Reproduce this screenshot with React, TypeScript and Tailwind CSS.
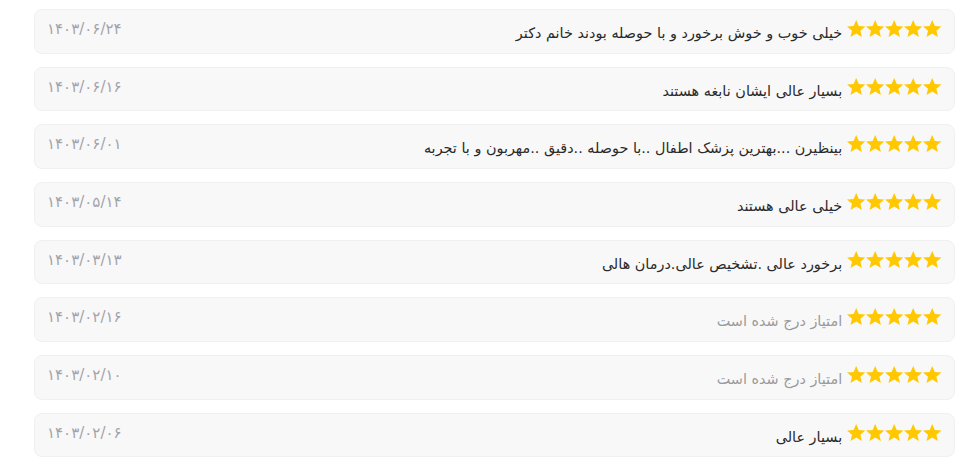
import React from 'react';

type Review = { date: string; text: string; muted?: boolean };

const reviews: Review[] = [
  { date: '۱۴۰۳/۰۶/۲۴', text: 'خیلی خوب و خوش برخورد و با حوصله بودند خانم دکتر' },
  { date: '۱۴۰۳/۰۶/۱۶', text: 'بسیار عالی ایشان نابغه هستند' },
  { date: '۱۴۰۳/۰۶/۰۱', text: 'بینظیرن ...بهترین پزشک اطفال ..با حوصله ..دقیق ..مهربون و با تجربه' },
  { date: '۱۴۰۳/۰۵/۱۴', text: 'خیلی عالی هستند' },
  { date: '۱۴۰۳/۰۳/۱۳', text: 'برخورد عالی .تشخیص عالی.درمان هالی' },
  { date: '۱۴۰۳/۰۲/۱۶', text: 'امتیاز درج شده است', muted: true },
  { date: '۱۴۰۳/۰۲/۱۰', text: 'امتیاز درج شده است', muted: true },
  { date: '۱۴۰۳/۰۲/۰۶', text: 'بسیار عالی' },
];

const Star = () => (
  <svg viewBox="1.5 2 21 20" preserveAspectRatio="none" className="w-[18.4px] h-[17px] mx-[0.4px]">
    <path
      d="M12 2l2.94 6.96 7.56.65-5.73 4.97 1.72 7.42L12 18.02 5.51 21.99l1.72-7.42L1.5 9.61l7.56-.65z"
      fill="#ffc800"
    />
  </svg>
);

const ReviewCard: React.FC<{ review: Review }> = ({ review }) => (
  <div className="h-[44.5px] rounded-lg border border-[#f0f0f0] bg-[#f8f8f8] flex items-start justify-between pl-[12px] pr-[12px] pt-[10px]">
    <div className="flex items-start">
      <div className="flex items-center shrink-0">
        {[0, 1, 2, 3, 4].map((i) => (
          <Star key={i} />
        ))}
      </div>
      <p
        className={`mr-[4px] mt-[3px] text-[14.4px] leading-[20px] ${
          review.muted ? 'text-[#9a9a9a]' : 'text-[#2a2a2a]'
        }`}
      >
        {review.text}
      </p>
    </div>
    <span dir="ltr" className="text-[15px] leading-[18px] text-[#a3a3ab]">
      {review.date}
    </span>
  </div>
);

const App: React.FC = () => {
  return (
    <div
      dir="rtl"
      className="min-h-[468px] bg-white pt-[9px] pl-[34px] pr-[10px] flex flex-col gap-[13.2px]"
      style={{ fontFamily: '"DejaVu Sans", sans-serif' }}
    >
      {reviews.map((r, i) => (
        <ReviewCard key={i} review={r} />
      ))}
    </div>
  );
};

export default App;
